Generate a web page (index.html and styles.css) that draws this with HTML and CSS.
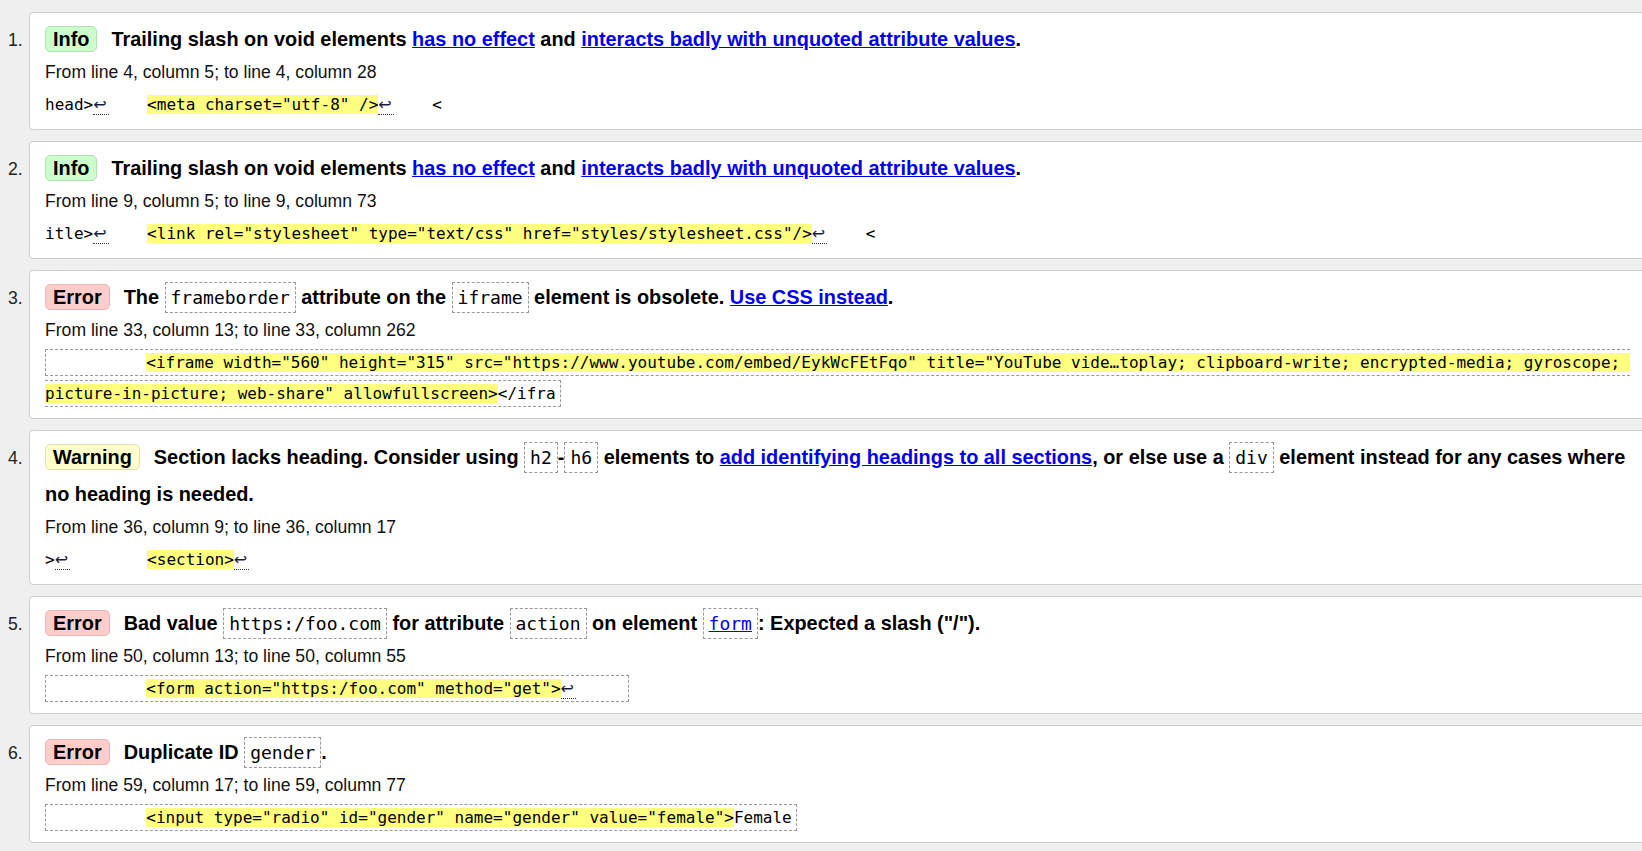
FILE: index.html
```html
<!DOCTYPE html>
<html lang="en">
<head>
<meta charset="utf-8">
<title>Validation messages</title>
<link rel="stylesheet" href="styles.css">
</head>
<body>
<div class="list">

  <div class="item">
    <span class="num">1.</span>
    <div class="card">
      <p class="msg"><span class="badge info">Info</span>Trailing slash on void elements <a href="#">has no effect</a> and <a href="#">interacts badly with unquoted attribute values</a>.</p>
      <p class="loc">From line 4, column 5; to line 4, column 28</p>
      <p class="extract"><code class="ext">head&gt;<span class="lf">↩</span>    <b>&lt;meta charset="utf-8" /&gt;</b><span class="lf">↩</span>    &lt;</code></p>
    </div>
  </div>

  <div class="item">
    <span class="num">2.</span>
    <div class="card">
      <p class="msg"><span class="badge info">Info</span>Trailing slash on void elements <a href="#">has no effect</a> and <a href="#">interacts badly with unquoted attribute values</a>.</p>
      <p class="loc">From line 9, column 5; to line 9, column 73</p>
      <p class="extract"><code class="ext">itle&gt;<span class="lf">↩</span>    <b>&lt;link rel="stylesheet" type="text/css" href="styles/stylesheet.css"/&gt;</b><span class="lf">↩</span>    &lt;</code></p>
    </div>
  </div>

  <div class="item">
    <span class="num">3.</span>
    <div class="card">
      <p class="msg"><span class="badge error">Error</span>The <code class="tc">frameborder</code> attribute on the <code class="tc">iframe</code> element is obsolete. <a href="#">Use CSS instead</a>.</p>
      <p class="loc">From line 33, column 13; to line 33, column 262</p>
      <p class="extract"><code class="ext boxed">          <b>&lt;iframe width="560" height="315" src="https://www.youtube.com/embed/EykWcFEtFqo" title="YouTube vide…toplay; clipboard-write; encrypted-media; gyroscope; picture-in-picture; web-share" allowfullscreen&gt;</b>&lt;/ifra</code></p>
    </div>
  </div>

  <div class="item">
    <span class="num">4.</span>
    <div class="card">
      <p class="msg"><span class="badge warning">Warning</span>Section lacks heading. Consider using <code class="tc">h2</code>-<code class="tc">h6</code> elements to <a href="#">add identifying headings to all sections</a>, or else use a <code class="tc">div</code> element instead for any cases where no heading is needed.</p>
      <p class="loc">From line 36, column 9; to line 36, column 17</p>
      <p class="extract"><code class="ext">&gt;<span class="lf">↩</span>        <b>&lt;section&gt;</b><span class="lf">↩</span></code></p>
    </div>
  </div>

  <div class="item">
    <span class="num">5.</span>
    <div class="card">
      <p class="msg"><span class="badge error">Error</span>Bad value <code class="tc">https:/foo.com</code> for attribute <code class="tc">action</code> on element <a href="#"><code class="tc">form</code></a>: Expected a slash ("/").</p>
      <p class="loc">From line 50, column 13; to line 50, column 55</p>
      <p class="extract"><code class="ext boxed">          <b>&lt;form action="https:/foo.com" method="get"&gt;</b><span class="lf">↩</span>     </code></p>
    </div>
  </div>

  <div class="item">
    <span class="num">6.</span>
    <div class="card">
      <p class="msg"><span class="badge error">Error</span>Duplicate ID <code class="tc">gender</code>.</p>
      <p class="loc">From line 59, column 17; to line 59, column 77</p>
      <p class="extract"><code class="ext boxed">          <b>&lt;input type="radio" id="gender" name="gender" value="female"&gt;</b>Female</code></p>
    </div>
  </div>

</div>
</body>
</html>
```
FILE: styles.css
```css
html, body {
  overflow: hidden;
}

body {
  margin: 0;
  background: #efefef;
  font-family: "Liberation Sans", Arial, sans-serif;
  font-size: 17.6px;
  color: #111;
}

.list {
  display: flex;
  flex-direction: column;
  gap: 11px;
  padding-top: 12px;
}

.item {
  display: flex;
  align-items: baseline;
}

.num {
  flex: none;
  width: 21px;
  padding-left: 8px;
  color: #222;
  font-size: 17.6px;
}

.card {
  flex: none;
  width: 1595px;
  padding: 8px 15px 9px;
  background: #fff;
  border: 1px solid #cfcfcf;
  border-radius: 4px;
}

.card p {
  margin: 0;
}

.msg {
  font-size: 19.9px;
  font-weight: bold;
  line-height: 37px;
  color: #000;
}

.msg a {
  color: #0000ee;
  text-decoration: underline;
}

.badge {
  display: inline-block;
  line-height: 24px;
  padding: 0 7px;
  border: 1px solid;
  border-radius: 5px;
  margin-right: 14px;
  color: #000;
}

.badge.info {
  background: #ccffcc;
  border-color: #b3e0b3;
}

.badge.error {
  background: #ffcccc;
  border-color: #e6b8b8;
}

.badge.warning {
  background: #ffffcc;
  border-color: #e0e0b0;
}

.tc {
  font-family: "DejaVu Sans Mono", "Liberation Mono", monospace;
  font-size: 18px;
  font-weight: normal;
  padding: 4px 5px;
  border: 1px dashed #999;
}

.loc {
  line-height: 28px;
  color: #111;
}

.extract {
  margin-top: 3px !important;
  line-height: 31px;
}

.ext {
  font-family: "DejaVu Sans Mono", "Liberation Mono", monospace;
  font-size: 16px;
  white-space: pre-wrap;
  color: #000;
}

.ext.boxed {
  border: 1px dashed #999;
  padding: 3px 4px;
}

.ext b {
  font-weight: normal;
  background: #ffff80;
}

.lf {
  font-family: "DejaVu Sans", sans-serif;
  font-size: 16px;
  padding-right: 2px;
  border-bottom: 1px dotted #333;
  color: #1a1a3a;
}
```
